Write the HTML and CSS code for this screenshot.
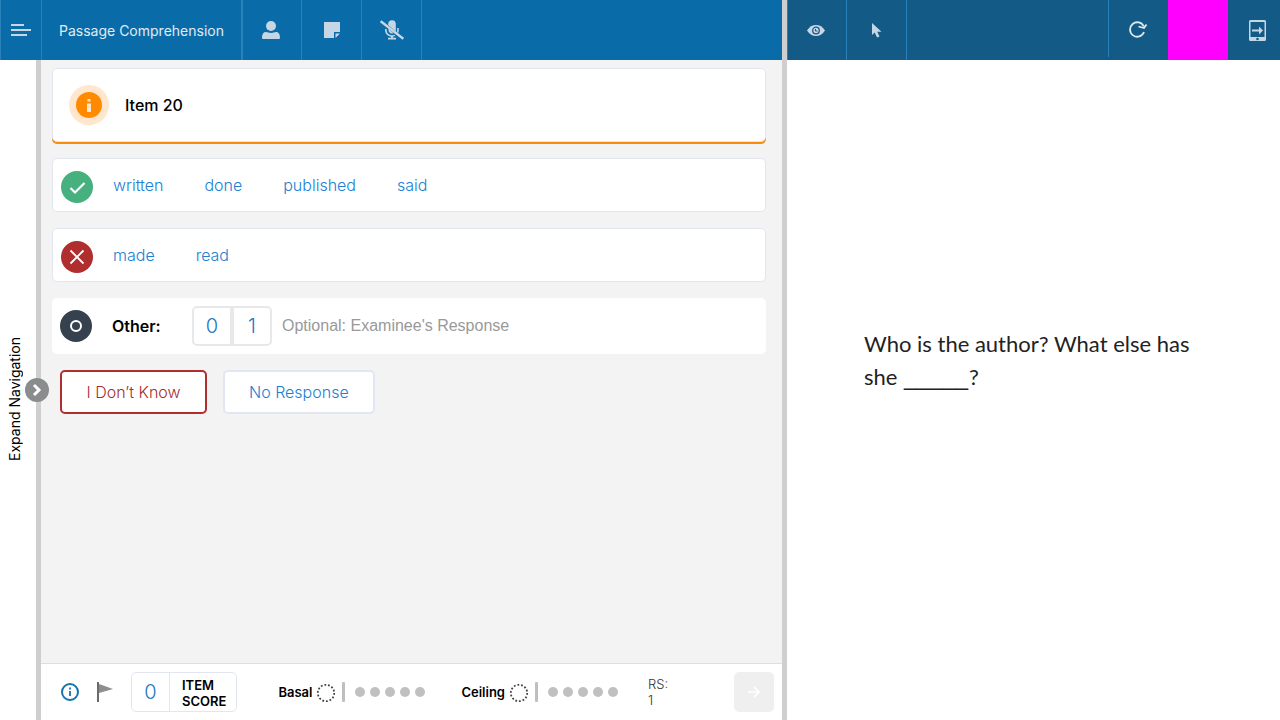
FILE: index.html
```html
<!DOCTYPE html>
<html lang="en">
<head>
<meta charset="utf-8">
<title>Passage Comprehension</title>
<link rel="stylesheet" href="styles.css">
</head>
<body>
<div class="app">
  <section class="examiner">
    <header class="bar">
      <button class="tool menu" aria-label="Menu"><svg width="20" height="12" viewBox="0 0 20 12" fill="currentColor"><path d="M0 0h13v2H0zM0 5h20v2H0zM0 10h16v2H0z"/></svg></button>
      <h1 class="title">Passage Comprehension</h1>
      <button class="tool user" aria-label="Examinee"><svg width="18" height="18" viewBox="0 0 18 18" fill="currentColor"><circle cx="9" cy="5" r="5"/><path d="M0 16.500C0 13 1.500 11 4 11c1.500 0 2.500 1 5 1s3.500-1 5-1c2.500 0 4 2 4 5.500 0 1-.5 1.500-1.500 1.500h-15C.5 18 0 17.500 0 16.500z"/></svg></button>
      <button class="tool" aria-label="Notes"><svg width="16" height="16" viewBox="0 0 16 16" fill="currentColor"><path d="M0 0h16v10h-6v6H0zM11.500 11.500H16L11.500 16z"/></svg></button>
      <button class="tool last" aria-label="Microphone off"><svg width="24" height="20" viewBox="0 0 24 20" fill="none" stroke="currentColor"><path d="M8.200 5V4A3.800 3.800 0 0 1 15.800 4v7.500z" fill="currentColor" stroke="none"/><path d="M8.500 8.500V10a3.500 3.500 0 0 0 5 3.200z" fill="currentColor" stroke="none"/><path d="M5.800 9V10a6.200 6.200 0 0 0 9 5.400M18 8v2c0 1-.2 2-.6 2.700" stroke-width="1.600"/><path d="M12 16v2M8 18.700h8" stroke-width="1.800"/><path d="M.7 1.200 23.300 18.800" stroke-width="2.400"/></svg></button>
    </header>
    <div class="workspace">
      <nav class="rail">
        <span class="rail-label" id="rail-label">Expand Navigation</span>
        <button class="rail-toggle" aria-labelledby="rail-label"><svg width="10" height="14" viewBox="0 0 10 14" fill="none" stroke="currentColor" stroke-width="3"><path d="m2 2 5 5-5 5"/></svg></button>
      </nav>
      <main class="main">
        <div class="items">
          <div class="card item-card">
            <span class="halo"><svg width="26" height="26" viewBox="0 0 26 26"><circle cx="13" cy="13" r="13" fill="#ff8a00"/><path d="M11.500 7h3v2.500h-3zM11 11.500h4V20h-4z" fill="#ffe6cc"/></svg></span>
            <h2 class="item-title">Item 20</h2>
          </div>
          <div class="card answers">
            <svg class="mark" width="32" height="32" viewBox="0 0 32 32"><circle cx="16" cy="16" r="16" fill="#47b07f"/><path d="m9.500 17 4.500 4.500L23.500 12" fill="none" stroke="#fff" stroke-width="2.200"/></svg>
            <button class="answer">written</button><button class="answer">done</button><button class="answer">published</button><button class="answer">said</button>
          </div>
          <div class="card answers">
            <svg class="mark" width="32" height="32" viewBox="0 0 32 32"><circle cx="16" cy="16" r="16" fill="#b02e2e"/><path d="m9.500 9.500 13 13m0-13-13 13" fill="none" stroke="#fff" stroke-width="1.800"/></svg>
            <button class="answer">made</button><button class="answer">read</button>
          </div>
          <div class="other">
            <svg width="32" height="32" viewBox="0 0 32 32"><circle cx="16" cy="16" r="16" fill="#35414f"/><circle cx="16" cy="16" r="5" fill="none" stroke="#fff" stroke-width="2"/></svg>
            <label class="other-label" for="response">Other:</label>
            <div class="scores"><button class="score">0</button><button class="score">1</button></div>
            <input class="response" id="response" type="text" placeholder="Optional: Examinee's Response">
          </div>
          <div class="actions">
            <button class="action unknown">I Don’t Know</button>
            <button class="action none">No Response</button>
          </div>
        </div>
        <footer class="footer">
          <button class="plain info" aria-label="Information"><svg width="18" height="18" viewBox="0 0 18 18" fill="none" stroke="#1474ae"><circle cx="9" cy="9" r="8" stroke-width="2"/><path d="M9 4.500v2M9 8v5" stroke-width="1.800"/></svg></button>
          <button class="plain flag" aria-label="Flag"><svg width="16" height="20" viewBox="0 0 16 20"><path d="m2 2 14 5-14 4z" fill="#8e8e8e"/><path d="M0 0h2v20H0z" fill="#6b6b6b"/></svg></button>
          <div class="item-score"><span class="score-value">0</span><span class="score-label">ITEM<br>SCORE</span></div>
          <div class="progress"><span class="progress-label">Basal</span><svg class="ring" width="20" height="20" viewBox="0 0 20 20"><circle cx="10" cy="10" r="8.200" fill="none" stroke="#444" stroke-width="1.800" stroke-dasharray="1.800 1.880"/></svg><span class="rule"></span><span class="dots"><i class="dot"></i><i class="dot"></i><i class="dot"></i><i class="dot"></i><i class="dot"></i></span></div>
          <div class="progress"><span class="progress-label">Ceiling</span><svg class="ring" width="20" height="20" viewBox="0 0 20 20"><circle cx="10" cy="10" r="8.200" fill="none" stroke="#444" stroke-width="1.800" stroke-dasharray="1.800 1.880"/></svg><span class="rule"></span><span class="dots"><i class="dot"></i><i class="dot"></i><i class="dot"></i><i class="dot"></i><i class="dot"></i></span></div>
          <div class="raw">RS:<br>1</div>
          <button class="next" aria-label="Next"><svg width="12" height="12" viewBox="0 0 12 12" fill="none" stroke="#fff" stroke-width="1.600"><path d="M0 6h11M6 1l5 5-5 5"/></svg></button>
        </footer>
      </main>
    </div>
  </section>
  <div class="splitter"></div>
  <section class="examinee">
    <header class="bar preview-bar">
      <button class="tool user" aria-label="View"><svg width="18" height="11" viewBox="0 0 18 11"><path d="M0 5.500C2.500 1.800 5.500 0 9 0s6.500 1.800 9 5.500C15.500 9.200 12.500 11 9 11S2.500 9.200 0 5.500z" fill="currentColor"/><circle cx="9" cy="5.500" r="3.300" fill="none" stroke="#145a86" stroke-width="1.300"/><path d="M8.500 4v2h2" fill="none" stroke="#145a86"/></svg></button>
      <button class="tool last" aria-label="Pointer"><svg width="10" height="15" viewBox="0 0 10 15" fill="currentColor"><path d="M0 0v12l2.700-2.400L5 14.500l2.500-1.100L5.300 8.800H9.500z"/></svg></button>
      <button class="tool refresh" aria-label="Refresh"><svg width="20" height="18" viewBox="0 0 20 18" fill="none" stroke="#dce8f1" stroke-width="1.800"><path d="M15.800 5.500A7.200 7.200 0 1 0 16 11M18.500 3.500 16 7 10.500 5.500"/></svg></button>
      <div class="swatch"></div>
      <button class="tool device" aria-label="Send to device"><svg width="17" height="21" viewBox="0 0 17 21"><path fill-rule="evenodd" d="M1.500 0h14A1.500 1.500 0 0 1 17 1.500v18a1.500 1.500 0 0 1-1.500 1.500h-14A1.500 1.500 0 0 1 0 19.500v-18A1.500 1.500 0 0 1 1.500 0zM1.500 2v15h14V2z" fill="currentColor"/><path d="M3 9.500h7V6.500l4 4-4 4v-3H3z" fill="currentColor"/><circle cx="8.500" cy="19" r="1.300" fill="#145a86"/></svg></button>
    </header>
    <div class="stage"><p class="passage">Who is the author? What else has she <span class="blank">_____</span>?</p></div>
  </section>
</div>
</body>
</html>
```
FILE: styles.css
```css
* { box-sizing: border-box; }
body { margin: 0; font-family: Inter, "Liberation Sans", sans-serif; color: #000; }
button, input { font: inherit; }
button { padding: 0; border: 0; background: none; color: inherit; cursor: pointer; }
h1, h2, p { margin: 0; }
svg { display: block; flex: none; }

.app { display: grid; grid-template-columns: minmax(0, 782fr) 5px minmax(0, 493fr); min-height: 100vh; }
.splitter { background: #cfcfcf; }
.examiner, .examinee { display: flex; flex-direction: column; }

.bar { display: flex; height: 60px; background: #096ca8; color: #c6d6e5; }
.preview-bar { background: #145a86; }
.tool { display: flex; flex: none; align-items: center; justify-content: center; width: 60px; border-left: 1px solid #2a80b9; }
.menu { width: 41px; }
.user { width: 59px; padding-right: 2px; }
.last { width: 61px; border-right: 1px solid #2a80b9; }
.title { width: 201px; border: solid #2a80b9; border-width: 0 1px; font-size: 14px; font-weight: 400; line-height: 62px; text-align: center; color: #e0ebf4; }
.refresh { height: 57px; margin-left: auto; padding: 2px 2px 0 0; }
.swatch { flex: none; width: 60px; background: #f0f; }
.device { width: 52px; padding-left: 6px; border: 0; }

.workspace { display: flex; flex: 1; }
.rail { position: relative; display: flex; align-items: center; justify-content: center; width: 41px; padding: 17px 7px 0 0; border-right: 5px solid #cfcfcf; background: #fff; }
.rail-label { writing-mode: vertical-rl; transform: rotate(180deg); font-size: 14px; line-height: 20px; white-space: nowrap; }
.rail-toggle { position: absolute; top: calc(50% - 12px); right: -13px; display: flex; align-items: center; justify-content: center; width: 24px; height: 24px; border-radius: 50%; background: #8a8d8d; color: #fff; }
.main { display: flex; flex: 1; flex-direction: column; min-width: 0; background: #f3f3f3; }
.items { display: flex; flex: 1; flex-direction: column; gap: 16px; padding: 8px 16px 16px 11px; }

.card { display: flex; align-items: center; border: 1px solid #e2e6f1; border-radius: 5px; background: #fff; }
.item-card { gap: 16px; height: 74px; padding: 0 16px; box-shadow: 0 2px 0 #f98b0d; }
.halo { display: flex; align-items: center; justify-content: center; width: 40px; height: 40px; border-radius: 50%; background: #ffe6cc; }
.item-title { font-size: 16px; font-weight: 500; }
.answers { gap: 41px; height: 54px; padding: 0 8px; }
.mark { margin: 3px -21px 0 0; }
.answer { font-size: 16px; font-weight: 300; color: #2180d3; }
.other { display: flex; align-items: center; height: 56px; padding: 0 8px; border-radius: 5px; background: #fff; }
.other-label { width: 80px; margin-left: 20px; font-size: 16px; font-weight: 600; }
.scores { display: flex; flex: none; }
.score { width: 40px; height: 40px; border: 2px solid #e8e8e8; font-size: 20px; font-weight: 300; color: #1f76bd; }
.score:first-child { border-radius: 5px 0 0 5px; }
.score:last-child { border-radius: 0 5px 5px 0; }
.response { flex: 1; min-width: 0; padding: 0 10px; border: 0; outline: 0; background: none; font-family: "Liberation Sans", Arial, sans-serif; font-size: 16px; }
.response::placeholder { color: #999; }
.actions { display: flex; gap: 16px; padding: 0 8px; }
.action { min-width: 147px; height: 44px; padding: 0 24px; border: 2px solid; border-radius: 5px; background: #fff; font-size: 16px; font-weight: 300; }
.unknown { border-color: #b02e2e; color: #a72b2f; }
.none { border-color: #e2e6f4; color: #2180d3; }

.footer { display: flex; align-items: center; height: 57px; padding: 0 8px 0 20px; border-top: 1px solid #dedede; background: #fff; }
.flag { margin: 0 18px; }
.item-score { display: flex; height: 40px; border: 1px solid #e2e6f1; border-radius: 5px; }
.score-value { width: 38px; border-right: 1px solid #e2e6f1; font-size: 20px; font-weight: 300; line-height: 38px; text-align: center; color: #1f76c8; }
.score-label { padding: 4px 10px 0 12px; font-size: 13px; font-weight: 600; line-height: 16px; }
.progress { display: flex; align-items: center; }
.item-score + .progress { margin: 0 36px 0 41px; }
.progress-label { font-size: 13px; font-weight: 600; }
.ring { margin: 2px 6px 0 4px; }
.rule { width: 3px; height: 20px; margin-right: 10px; border-radius: 1px; background: #bfbfbf; }
.dots { display: flex; gap: 5px; }
.dot { width: 10px; height: 10px; border-radius: 50%; background: #bfc0c0; }
.raw { margin-left: 30px; font-size: 13px; font-weight: 300; line-height: 16px; color: #333; }
.next { display: flex; align-items: center; justify-content: center; width: 40px; height: 40px; margin-left: auto; border-radius: 5px; background: #efefef; }

.stage { display: flex; flex: 1; align-items: center; justify-content: center; padding: 0 77px 60px; background: #fff; }
.passage { flex: 1; font-family: Lato, sans-serif; font-size: 22px; line-height: 33px; color: #222; }
.blank { display: inline-block; padding: 0 1px; font-family: "Liberation Sans", sans-serif; font-size: 23px; line-height: 1; }
```
